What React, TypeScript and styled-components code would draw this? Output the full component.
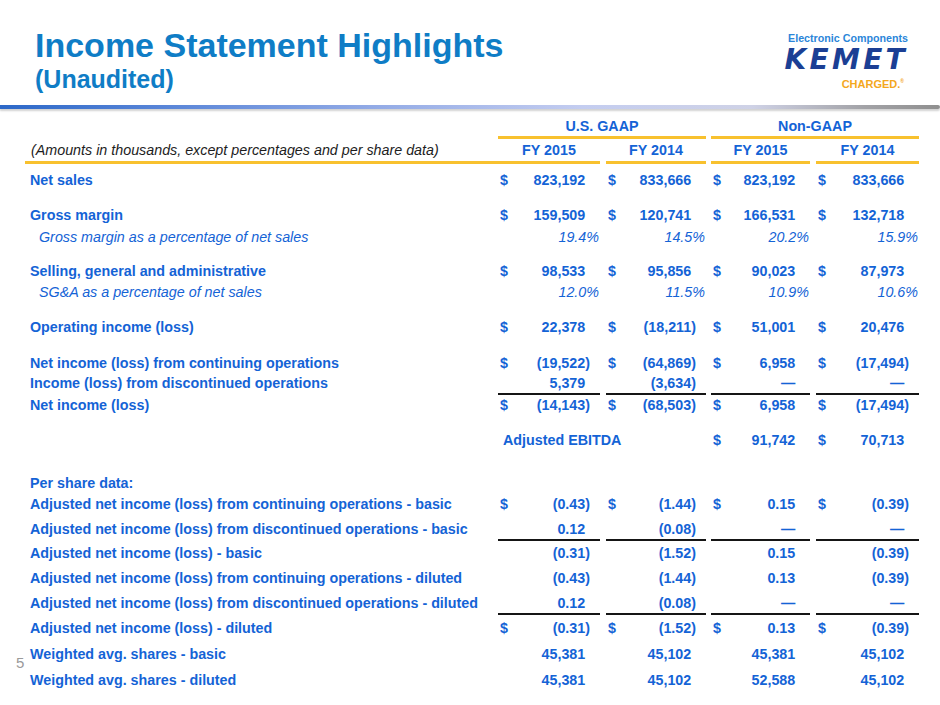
import React from "react";
import styled, { createGlobalStyle } from "styled-components";

const GlobalStyle = createGlobalStyle`
    body {
        margin: 0;
        background: #ffffff;
        font-family: "Liberation Sans", Arial, sans-serif;
    }
`;

const BLUE = "#1463d6";
const YELLOW = "#f8c12e";

const Slide = styled.div`
    position: relative;
    width: 940px;
    height: 705px;
    overflow: hidden;
    background: #ffffff;
`;

const Header = styled.header`
    box-sizing: border-box;
    height: 105px;
    padding: 28px 32px 0 35px;
    display: flex;
    justify-content: space-between;
    align-items: flex-start;
`;

const TitleBlock = styled.div`
    display: flex;
    flex-direction: column;
    gap: 5px;
`;

const Title = styled.h1`
    margin: 0;
    font-size: 34px;
    line-height: 34px;
    font-weight: bold;
    color: #0f7dc6;
`;

const Subtitle = styled.h2`
    margin: 0;
    font-size: 25px;
    line-height: 25px;
    font-weight: bold;
    color: #0f7dc6;
`;

const Logo = styled.div`
    margin-top: 5px;
    display: flex;
    flex-direction: column;
    align-items: flex-end;
`;

const Tagline = styled.div`
    font-size: 10.7px;
    line-height: 11px;
    font-weight: bold;
    color: #2b86d9;
`;

const Brand = styled.div`
    font-family: "DejaVu Sans", sans-serif;
    font-size: 28px;
    line-height: 32px;
    font-weight: bold;
    font-style: oblique;
    letter-spacing: 3.3px;
    color: #1b3f94;
`;

const Charged = styled.div`
    font-size: 11px;
    line-height: 11px;
    font-weight: bold;
    color: #f4a71d;
    margin-right: 4px;

    sup {
        font-size: 5px;
        vertical-align: 5px;
    }
`;

const Rule = styled.div`
    height: 4px;
    border-radius: 0 2px 2px 0;
    background: linear-gradient(
        to right,
        #2c68c8 0%,
        #5a86d8 18%,
        #93abe6 40%,
        #c4cdf0 62%,
        #cfd2e6 80%,
        #a2a2a6 92%,
        #8f8f8f 100%
    );
    box-shadow: 0 2px 2px rgba(0, 0, 0, 0.18);
`;

const Table = styled.section`
    padding: 7px 0 0 25px;
    display: flex;
    flex-direction: column;
`;

const Row = styled.div<{ $gap: number }>`
    display: flex;
    align-items: stretch;
    margin-top: ${(p) => p.$gap}px;
    font-size: 14.3px;
    line-height: 20px;
`;

const Label = styled.div<{ $kind: "bold" | "sub" | "note" | "empty"; $line?: boolean }>`
    box-sizing: border-box;
    width: 473px;
    flex-shrink: 0;
    padding-left: ${(p) => (p.$kind === "sub" ? 14 : p.$kind === "note" ? 6 : 5)}px;
    font-weight: ${(p) => (p.$kind === "bold" ? "bold" : "normal")};
    font-style: ${(p) => (p.$kind === "sub" || p.$kind === "note" ? "italic" : "normal")};
    color: ${(p) => (p.$kind === "note" ? "#1d1d1d" : BLUE)};
    white-space: nowrap;
    line-height: ${(p) => (p.$line ? "22px" : "inherit")};
    border-bottom: ${(p) => (p.$line ? `3px solid ${YELLOW}` : "none")};
`;

const GroupHead = styled.div<{ $ml: number }>`
    width: 208px;
    margin-left: ${(p) => p.$ml}px;
    text-align: center;
    font-weight: bold;
    color: ${BLUE};
    border-bottom: 3px solid ${YELLOW};
`;

const YearHead = styled.div<{ $w: number; $ml: number }>`
    width: ${(p) => p.$w}px;
    margin-left: ${(p) => p.$ml}px;
    text-align: center;
    font-weight: bold;
    color: ${BLUE};
    line-height: 22px;
    border-bottom: 3px solid ${YELLOW};
`;

const Cell = styled.div<{ $w: number; $ml: number; $rule?: boolean; $pct?: boolean }>`
    box-sizing: border-box;
    width: ${(p) => p.$w}px;
    margin-left: ${(p) => p.$ml}px;
    flex-shrink: 0;
    display: flex;
    justify-content: space-between;
    padding: ${(p) => (p.$pct ? "0 1px 0 2px" : "0 10px 0 2px")};
    font-weight: ${(p) => (p.$pct ? "normal" : "bold")};
    font-style: ${(p) => (p.$pct ? "italic" : "normal")};
    color: ${BLUE};
    border-bottom: ${(p) => (p.$rule ? "2px solid #151515" : "none")};
`;

const Amount = styled.span<{ $neg: boolean }>`
    margin-left: auto;
    padding-right: ${(p) => (p.$neg ? "0" : "0.333em")};
`;

const Wide = styled.div<{ $w: number }>`
    width: ${(p) => p.$w}px;
    padding-left: 5px;
    box-sizing: border-box;
    font-weight: bold;
    color: ${BLUE};
`;

const PageNumber = styled.div`
    position: absolute;
    left: 16px;
    top: 654px;
    font-size: 15px;
    line-height: 18px;
    color: #9a9a9a;
`;

const COLS = [
    { w: 102, ml: 0 },
    { w: 100, ml: 6 },
    { w: 99, ml: 5 },
    { w: 103, ml: 6 },
];

interface Line {
    label: string;
    kind: "bold" | "sub";
    gap: number;
    values?: string[];
    dollar?: boolean;
    rule?: boolean;
}

const LINES: Line[] = [
    { label: "Net sales", kind: "bold", gap: 6, values: ["823,192", "833,666", "823,192", "833,666"], dollar: true },
    { label: "Gross margin", kind: "bold", gap: 15, values: ["159,509", "120,741", "166,531", "132,718"], dollar: true },
    { label: "Gross margin as a percentage of net sales", kind: "sub", gap: 2, values: ["19.4%", "14.5%", "20.2%", "15.9%"] },
    { label: "Selling, general and administrative", kind: "bold", gap: 14, values: ["98,533", "95,856", "90,023", "87,973"], dollar: true },
    { label: "SG&A as a percentage of net sales", kind: "sub", gap: 1, values: ["12.0%", "11.5%", "10.9%", "10.6%"] },
    { label: "Operating income (loss)", kind: "bold", gap: 15, values: ["22,378", "(18,211)", "51,001", "20,476"], dollar: true },
    { label: "Net income (loss) from continuing operations", kind: "bold", gap: 16, values: ["(19,522)", "(64,869)", "6,958", "(17,494)"], dollar: true },
    { label: "Income (loss) from discontinued operations", kind: "bold", gap: 0, values: ["5,379", "(3,634)", "—", "—"], rule: true },
    { label: "Net income (loss)", kind: "bold", gap: 0, values: ["(14,143)", "(68,503)", "6,958", "(17,494)"], dollar: true },
];

const PER_SHARE: Line[] = [
    { label: "Per share data:", kind: "bold", gap: 23 },
    { label: "Adjusted net income (loss) from continuing operations - basic", kind: "bold", gap: 1, values: ["(0.43)", "(1.44)", "0.15", "(0.39)"], dollar: true },
    { label: "Adjusted net income (loss) from discontinued operations - basic", kind: "bold", gap: 4.5, values: ["0.12", "(0.08)", "—", "—"], rule: true },
    { label: "Adjusted net income (loss) - basic", kind: "bold", gap: 2.5, values: ["(0.31)", "(1.52)", "0.15", "(0.39)"] },
    { label: "Adjusted net income (loss) from continuing operations - diluted", kind: "bold", gap: 5, values: ["(0.43)", "(1.44)", "0.13", "(0.39)"] },
    { label: "Adjusted net income (loss) from discontinued operations - diluted", kind: "bold", gap: 5, values: ["0.12", "(0.08)", "—", "—"], rule: true },
    { label: "Adjusted net income (loss) - diluted", kind: "bold", gap: 3, values: ["(0.31)", "(1.52)", "0.13", "(0.39)"], dollar: true },
    { label: "Weighted avg. shares - basic", kind: "bold", gap: 6, values: ["45,381", "45,102", "45,381", "45,102"] },
    { label: "Weighted avg. shares - diluted", kind: "bold", gap: 6, values: ["45,381", "45,102", "52,588", "45,102"] },
];

function ValueCell({ value, col, dollar, rule, pct }: { value: string; col: number; dollar?: boolean; rule?: boolean; pct?: boolean }) {
    const { w, ml } = COLS[col];
    return (
        <Cell $w={w} $ml={ml} $rule={rule} $pct={pct}>
            {dollar && <span>$</span>}
            {pct ? <Amount $neg>{value}</Amount> : <Amount $neg={value.startsWith("(")}>{value}</Amount>}
        </Cell>
    );
}

function DataRow({ line }: { line: Line }) {
    const pct = line.kind === "sub";
    return (
        <Row $gap={line.gap}>
            <Label $kind={line.kind}>{line.label}</Label>
            {line.values?.map((v, i) => (
                <ValueCell key={i} value={v} col={i} dollar={line.dollar} rule={line.rule} pct={pct} />
            ))}
        </Row>
    );
}

const App: React.FC = () => {
    return (
        <Slide>
            <GlobalStyle />
            <Header>
                <TitleBlock>
                    <Title>Income Statement Highlights</Title>
                    <Subtitle>(Unaudited)</Subtitle>
                </TitleBlock>
                <Logo>
                    <Tagline>Electronic Components</Tagline>
                    <Brand>KEMET</Brand>
                    <Charged>
                        CHARGED.<sup>®</sup>
                    </Charged>
                </Logo>
            </Header>
            <Rule />
            <Table>
                <Row $gap={0}>
                    <Label $kind="empty" />
                    <GroupHead $ml={0}>U.S. GAAP</GroupHead>
                    <GroupHead $ml={5}>Non-GAAP</GroupHead>
                </Row>
                <Row $gap={0}>
                    <Label $kind="note" $line>
                        (Amounts in thousands, except percentages and per share data)
                    </Label>
                    {["FY 2015", "FY 2014", "FY 2015", "FY 2014"].map((y, i) => (
                        <YearHead key={i} $w={COLS[i].w} $ml={COLS[i].ml}>
                            {y}
                        </YearHead>
                    ))}
                </Row>
                {LINES.map((line, i) => (
                    <DataRow key={i} line={line} />
                ))}
                <Row $gap={15}>
                    <Label $kind="empty" />
                    <Wide $w={208}>Adjusted EBITDA</Wide>
                    <ValueCell value="91,742" col={2} dollar />
                    <ValueCell value="70,713" col={3} dollar />
                </Row>
                {PER_SHARE.map((line, i) => (
                    <DataRow key={i} line={line} />
                ))}
            </Table>
            <PageNumber>5</PageNumber>
        </Slide>
    );
};

export default App;
